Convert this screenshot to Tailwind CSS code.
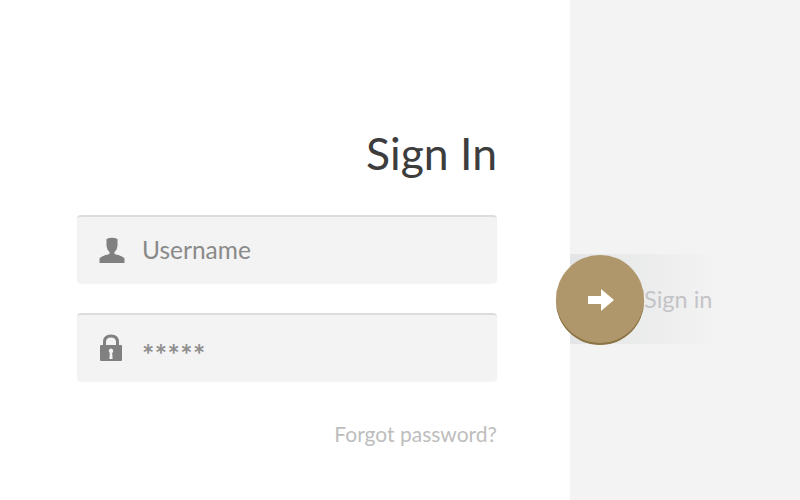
<!DOCTYPE html>
<html lang="en">
<head>
    <meta charset="UTF-8">
    <title>Sign In</title>
    <script src="https://cdn.jsdelivr.net/npm/@tailwindcss/browser@4"></script>
</head>
<body class="bg-white">
    <div class="flex w-[800px] h-[500px] overflow-hidden font-['Lato',sans-serif]">

        <!-- Form -->
        <div class="w-[570px] pl-[77px] pr-[73px] pt-[126px] flex flex-col">
            <h1 class="text-right text-[44.5px] leading-[54px] font-normal text-[#3d3d3d]">Sign In</h1>

            <div class="mt-[35px] h-[68px] flex items-center bg-[#f3f3f3] rounded-[4px] border-t-2 border-[#dcdcdc] shadow-[0_1px_1px_rgba(0,0,0,0.04)]">
                <svg class="ml-[22px] w-[26px] h-[26px]" viewBox="0 0 26 26">
                    <path fill="#808080" d="M7.5 2 Q13 -0.5 18.5 2 L18.5 9 Q18 13 15.5 15 L15.5 17 Q23 18.5 25.5 21.5 L25.5 26 L0.5 26 L0.5 21.5 Q3 18.5 10.5 17 L10.5 15 Q8 13 7.5 9 Z"/>
                </svg>
                <span class="ml-[17px] text-[24.5px] text-[#8a8a8a]">Username</span>
            </div>

            <div class="mt-[30px] h-[68px] flex items-center bg-[#f3f3f3] rounded-[4px] border-t-2 border-[#dcdcdc] shadow-[0_1px_1px_rgba(0,0,0,0.04)]">
                <svg class="ml-[22px] w-[24px] h-[28px]" viewBox="0 0 24 28">
                    <path fill="none" stroke="#808080" stroke-width="3" d="M5.5 12 V8 Q5.5 2 12 2 Q18.5 2 18.5 8 V12"/>
                    <path fill="#808080" fill-rule="evenodd" d="M2 11 H22 Q23 11 23 12 V26 Q23 27 22 27 H2 Q1 27 1 26 V12 Q1 11 2 11 Z M12 14.5 a2.5 2.5 0 0 0 -1.2 4.5 L10.4 25 H13.6 L13.2 19 A2.5 2.5 0 0 0 12 14.5 Z"/>
                </svg>
                <span class="ml-[19px] pt-[12px] text-[29px] font-bold tracking-[0.4px] text-[#8f8f8f]">*****</span>
            </div>

            <a href="#" class="mt-[38px] text-right text-[21px] leading-[30px] text-[#bdbdbd]">Forgot password?</a>
        </div>

        <!-- Sign in panel -->
        <div class="w-[230px] bg-[#f3f3f3] pt-[254px]">
            <div class="w-[150px] h-[90px] pl-[74px] pt-[2px] flex items-center bg-gradient-to-r from-[#e4e5e6] to-[#f3f3f3]">
                <span class="text-[23.5px] text-[#c4c4c6]">Sign in</span>
            </div>
        </div>

        <!-- Round button over the panel edge -->
        <button class="absolute left-[556px] top-[255px] w-[88px] h-[90px] rounded-full bg-[#b0976b] shadow-[inset_0_-2px_0_#8a7345] flex items-center justify-center">
            <svg class="w-[28px] h-[24px] ml-[2px]" viewBox="0 0 28 24">
                <path fill="#fff" d="M1 8 H14 V1 L27 12 L14 23 V16 H1 Z"/>
            </svg>
        </button>
    </div>
</body>
</html>
